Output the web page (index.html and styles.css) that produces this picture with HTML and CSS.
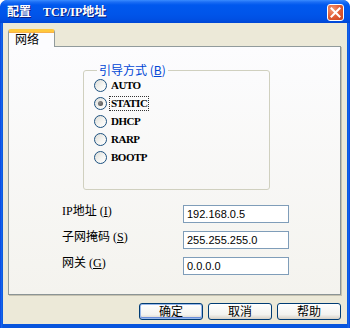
FILE: index.html
```html
<!DOCTYPE html>
<html lang="zh-CN">
<head>
<meta charset="utf-8">
<title>配置 TCP/IP地址</title>
<link rel="stylesheet" href="styles.css">
</head>
<body>
<div class="window">
  <div class="titlebar">
    <span class="title">配置　TCP/IP地址</span>
    <span class="close"><svg width="11" height="11" viewBox="0 0 11 11"><path d="M1.5 1.5 L9.5 9.5 M9.5 1.5 L1.5 9.5" stroke="#fff" stroke-width="2" stroke-linecap="square"/></svg></span>
  </div>
  <div class="client">
    <div class="tabs"><div class="tab">网络</div></div>
    <div class="panel">
      <fieldset class="group">
        <legend class="legend">引导方式 (<u>B</u>)</legend>
        <div class="radio"><span class="circle"></span><span class="rlabel">AUTO</span></div>
        <div class="radio"><span class="circle checked"></span><span class="rlabel focus">STATIC</span></div>
        <div class="radio"><span class="circle"></span><span class="rlabel">DHCP</span></div>
        <div class="radio"><span class="circle"></span><span class="rlabel">RARP</span></div>
        <div class="radio"><span class="circle"></span><span class="rlabel">BOOTP</span></div>
      </fieldset>
      <div class="form">
        <span class="flabel">IP地址 (<u>I</u>)</span><span class="field">192.168.0.5</span>
        <span class="flabel">子网掩码 (<u>S</u>)</span><span class="field">255.255.255.0</span>
        <span class="flabel">网关 (<u>G</u>)</span><span class="field">0.0.0.0</span>
      </div>
    </div>
    <div class="buttons">
      <span class="btn default">确定</span>
      <span class="btn">取消</span>
      <span class="btn">帮助</span>
    </div>
  </div>
</div>
</body>
</html>
```
FILE: styles.css
```css
html, body { margin: 0; padding: 0; }
body { width: 350px; height: 328px; overflow: hidden; background: #fff; font-family: "Noto Sans CJK SC", sans-serif; }
.window {
  width: 350px; height: 328px; box-sizing: border-box;
  display: flex; flex-direction: column;
  background: linear-gradient(90deg, #0831D9 0, #166AEE 1px, #0855DD 3px, #0855DD 347px, #166AEE 349px, #0831D9 350px);
  border-radius: 7px 7px 0 0;
  padding: 0 3px 4px 3px;
  overflow: hidden;
}
.titlebar {
  height: 23px; margin: 0 -3px; padding: 0 6px 0 7px;
  display: flex; align-items: center; justify-content: space-between;
  background: linear-gradient(#3A8CFF 0, #1C6EF5 2px, #0058EE 5px, #0055EA 14px, #0050E4 19px, #0046D5 23px);
  border-radius: 7px 7px 0 0;
}
.title {
  color: #fff; font-weight: bold; font-size: 12px; line-height: 14px;
  font-family: "Liberation Serif", "Noto Sans CJK SC", serif;
  text-shadow: 1px 1px 0 #0A1E80;
  margin-top: 1px;
}
.close {
  width: 17px; height: 17px; box-sizing: border-box;
  border: 1px solid #fff; border-radius: 3px;
  background: radial-gradient(circle at 30% 30%, #F09A78 0, #E3603A 45%, #C8401A 100%);
  display: flex; align-items: center; justify-content: center;
  margin-top: 2px;
}
.client {
  flex: 1; background: #ECE9D8;
  display: flex; flex-direction: column;
  padding: 6px 6px 4px 5px;
}
.tabs { display: flex; height: 17px; position: relative; z-index: 1; }
.tab {
  width: 47px; height: 18px; box-sizing: border-box;
  border: 1px solid #919B9C; border-bottom: none;
  border-top: 3px solid #FFC83C;
  border-radius: 3px 3px 0 0;
  box-shadow: inset 0 1px 0 #F7B04A;
  background: #FCFCFE;
  font-size: 12px; line-height: 13px; padding-left: 6px; color: #000;
}
.panel {
  height: 249px; box-sizing: border-box;
  border: 1px solid #919B9C; border-right-color: #8B9495; border-bottom-color: #8B9495;
  box-shadow: 1px 1px 0 #C6C2B0;
  background: linear-gradient(#FCFCFE, #F4F3EE);
  display: flex; flex-direction: column;
}
.group {
  margin: 17px 0 0 74px; width: 187px; height: 126px; box-sizing: border-box;
  border: 1px solid #D0D0BF; border-radius: 3px;
  padding: 0 0 0 10px;
}
.legend {
  color: #0046D5; font-size: 12px; line-height: 12px; padding: 0 2px; margin-left: 3px;
}
.legend u, .flabel u { text-decoration: underline; }
.radio { display: flex; align-items: center; height: 18px; }
.circle {
  width: 13px; height: 13px; box-sizing: border-box; border-radius: 50%;
  border: 1px solid #1C5180;
  background: linear-gradient(135deg, #DCDCD7 0, #F6F6F3 60%, #FFFFFF 100%);
  display: flex; align-items: center; justify-content: center;
}
.circle.checked::after {
  content: ""; width: 5px; height: 5px; border-radius: 50%;
  background: radial-gradient(circle at 35% 35%, #8A8A8A, #4A4A4A);
}
.rlabel {
  margin-left: 2px; padding: 0 1px;
  font-family: "Liberation Serif", serif; font-size: 11px; letter-spacing: -0.5px;
  line-height: 13px; color: #000; font-weight: bold;
  border: 1px solid transparent;
}
.rlabel.focus { border: 1px dotted #333; }
.form {
  display: grid; grid-template-columns: 121px 106px; row-gap: 8px;
  margin: 15px 0 0 53px;
}
.flabel {
  font-size: 12px; line-height: 12px; color: #000; align-self: start;
  font-family: "Liberation Serif", "Noto Sans CJK SC", serif;
}
.field {
  height: 18px; box-sizing: border-box; border: 1px solid #7F9DB9; background: #fff;
  font-family: "Liberation Sans", sans-serif; font-size: 11px; line-height: 16px;
  padding-left: 3px; color: #000;
}
.buttons { display: flex; justify-content: flex-end; gap: 5px; margin-top: 8px; }
.btn {
  width: 64px; height: 17px; box-sizing: border-box;
  border: 1px solid #003C74; border-radius: 3px;
  background: linear-gradient(#FFFFFF, #F3F3EF 70%, #D6D0C5);
  font-size: 12px; line-height: 14px; text-align: center; color: #000;
}
.btn.default { box-shadow: inset 0 0 0 1px #98B8EA, inset 0 -1px 0 1px #6A8EDB; }
```
